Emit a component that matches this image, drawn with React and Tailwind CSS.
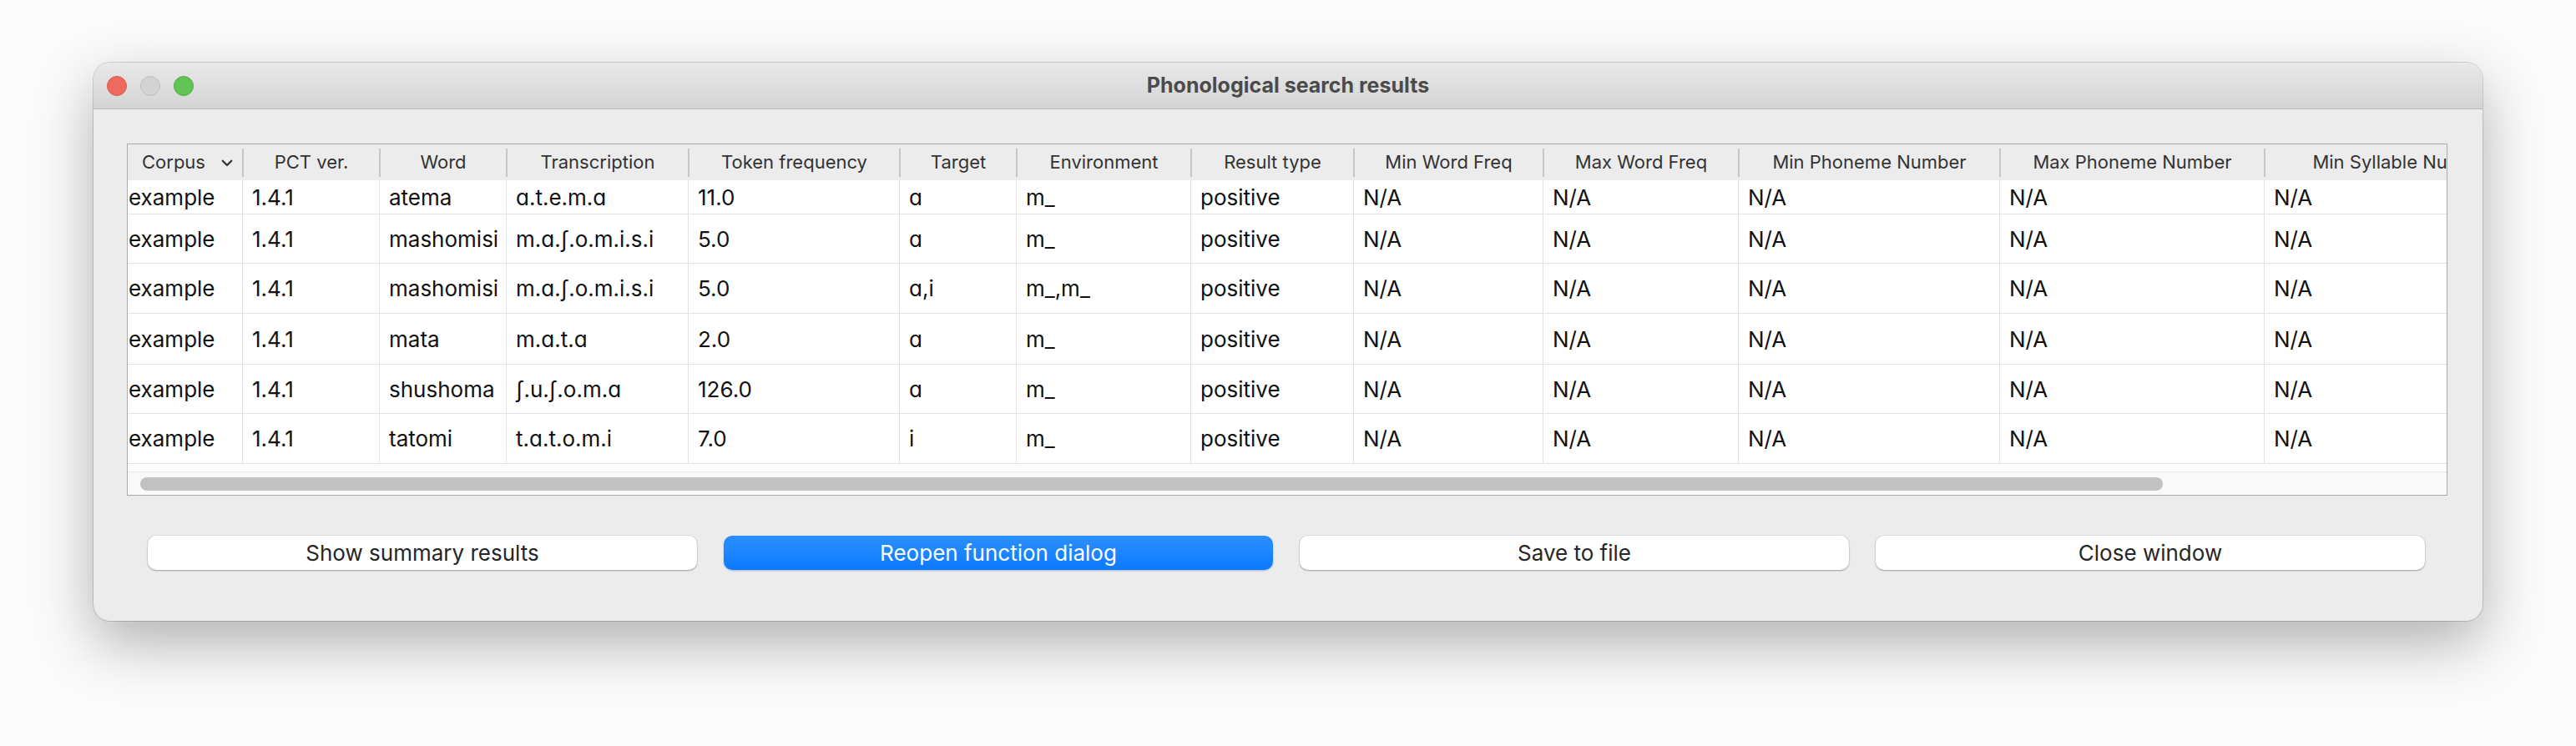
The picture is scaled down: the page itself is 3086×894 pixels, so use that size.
import React from "react";

const columns = [
  { name: "Corpus", width: 137 },
  { name: "PCT ver.", width: 164 },
  { name: "Word", width: 152 },
  { name: "Transcription", width: 218 },
  { name: "Token frequency", width: 253 },
  { name: "Target", width: 140 },
  { name: "Environment", width: 209 },
  { name: "Result type", width: 195 },
  { name: "Min Word Freq", width: 227 },
  { name: "Max Word Freq", width: 234 },
  { name: "Min Phoneme Number", width: 313 },
  { name: "Max Phoneme Number", width: 317 },
  { name: "Min Syllable Number", width: 330 },
];

const NA = ["N/A", "N/A", "N/A", "N/A", "N/A"];

const rows = [
  { h: "h-[41px]", cells: ["example", "1.4.1", "atema", "ɑ.t.e.m.ɑ", "11.0", "ɑ", "m_", "positive", ...NA] },
  { h: "h-[59px]", cells: ["example", "1.4.1", "mashomisi", "m.ɑ.ʃ.o.m.i.s.i", "5.0", "ɑ", "m_", "positive", ...NA] },
  { h: "h-[60px]", cells: ["example", "1.4.1", "mashomisi", "m.ɑ.ʃ.o.m.i.s.i", "5.0", "ɑ,i", "m_,m_", "positive", ...NA] },
  { h: "h-[61px]", cells: ["example", "1.4.1", "mata", "m.ɑ.t.ɑ", "2.0", "ɑ", "m_", "positive", ...NA] },
  { h: "h-[59px]", cells: ["example", "1.4.1", "shushoma", "ʃ.u.ʃ.o.m.ɑ", "126.0", "ɑ", "m_", "positive", ...NA] },
  { h: "h-[60px]", cells: ["example", "1.4.1", "tatomi", "t.ɑ.t.o.m.i", "7.0", "i", "m_", "positive", ...NA] },
];

const buttons = [
  { label: "Show summary results", primary: false },
  { label: "Reopen function dialog", primary: true },
  { label: "Save to file", primary: false },
  { label: "Close window", primary: false },
];

const App = () => {
  return (
    <div className="w-[3086px] h-[894px] bg-[#fbfbfb] pt-[75px] pl-[112px] font-['Inter',sans-serif] overflow-hidden">
      <div className="w-[2862px] h-[669px] rounded-[20px] bg-[#ececec] overflow-hidden flex flex-col shadow-[0_26px_70px_rgba(0,0,0,0.3),0_0_0_1px_rgba(0,0,0,0.14)]">
        {/* title bar */}
        <div className="h-[56px] shrink-0 flex items-center bg-linear-to-b from-[#e9e9e9] to-[#d4d4d4] border-b border-[#bcbcbc]">
          <div className="flex items-center gap-[16px] pl-[16px] w-[300px]">
            <div className="w-[24px] h-[24px] rounded-full bg-[#ee6a5f] border border-[#d85a50]"></div>
            <div className="w-[24px] h-[24px] rounded-full bg-[#d3d3d3] border border-[#bdbdbd]"></div>
            <div className="w-[24px] h-[24px] rounded-full bg-[#61c454] border border-[#50ac43]"></div>
          </div>
          <div className="flex-1 text-center text-[25px] font-bold text-[#4b4b4b] pr-[300px]">
            Phonological search results
          </div>
        </div>

        {/* table */}
        <div className="pt-[41px] pl-[40px]">
          <div className="w-[2780px] h-[422px] border border-[#ababab] bg-white overflow-hidden flex flex-col">
            <div className="h-[43px] shrink-0 flex bg-[#ececec]">
              {columns.map((col, i) => (
                <div
                  key={col.name}
                  className="shrink-0 flex items-center"
                  style={{ width: col.width }}
                >
                  {i > 0 && <div className="w-[2px] h-[34px] bg-[#c6c6c6] shrink-0"></div>}
                  <div className="flex-1 text-center text-[22px] text-[#333] whitespace-nowrap">
                    {col.name}
                  </div>
                  {i === 0 && (
                    <svg
                      className="w-[18px] h-[18px] mr-[9px] text-[#333]"
                      viewBox="0 0 24 24"
                      fill="none"
                      stroke="currentColor"
                      strokeWidth={3}
                      strokeLinecap="round"
                      strokeLinejoin="round"
                    >
                      <path d="M5 9l7 7 7-7" />
                    </svg>
                  )}
                </div>
              ))}
            </div>

            {rows.map((row, r) => (
              <div key={r} className={`${row.h} shrink-0 flex border-b border-[#e3e3e3]`}>
                {row.cells.map((cell, i) => (
                  <div
                    key={i}
                    className={`shrink-0 flex items-center text-[26px] text-[#111] whitespace-nowrap ${
                      i === 0 ? "pl-[1px]" : "pl-[11px] border-l border-[#e3e3e3]"
                    }`}
                    style={{ width: columns[i].width }}
                  >
                    {cell}
                  </div>
                ))}
              </div>
            ))}

            <div className="h-[10px] shrink-0 border-b border-[#e6e6e6]"></div>
            <div className="flex-1 bg-[#f9f9f9] flex items-center pl-[15px]">
              <div className="w-[2423px] h-[16px] rounded-full bg-[#c1c1c1]"></div>
            </div>
          </div>
        </div>

        {/* buttons */}
        <div className="flex gap-[32px] pl-[65px] pt-[48px]">
          {buttons.map((b) => (
            <button
              key={b.label}
              className={`w-[658px] h-[41px] rounded-[10px] text-[26px] flex items-center justify-center ${
                b.primary
                  ? "bg-linear-to-b from-[#2a8fff] to-[#0a7aff] text-white shadow-[0_1px_2px_rgba(0,60,160,0.3)]"
                  : "bg-white text-[#262626] shadow-[0_1px_2px_rgba(0,0,0,0.3),0_0_0_1px_rgba(0,0,0,0.05)]"
              }`}
            >
              {b.label}
            </button>
          ))}
        </div>
      </div>
    </div>
  );
};

export default App;
